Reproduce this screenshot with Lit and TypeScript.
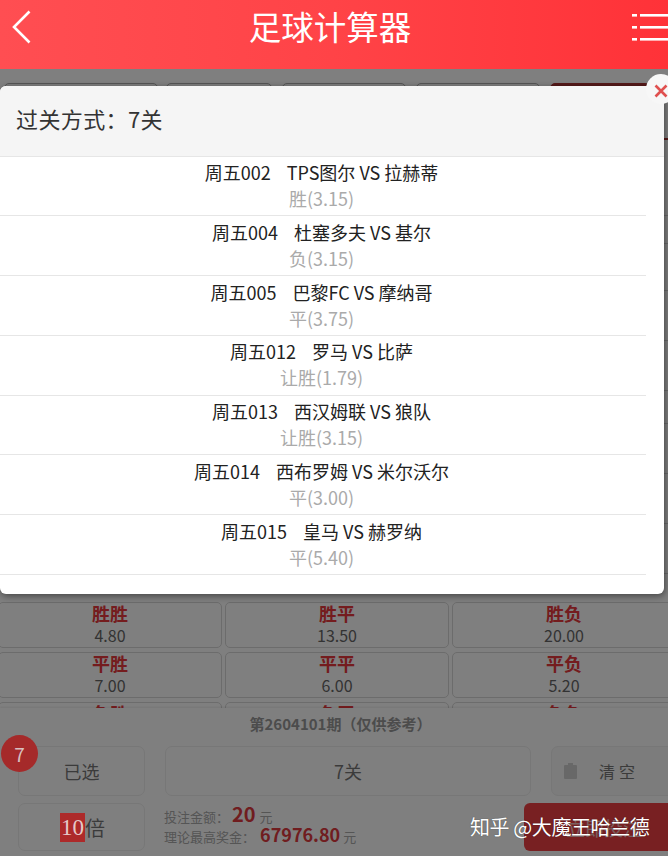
import { LitElement, html, css } from "lit";
import { customElement } from "lit/decorators.js";

const MATCHES = [
  { code: "周五002", teams: "TPS图尔 VS 拉赫蒂", pick: "胜(3.15)" },
  { code: "周五004", teams: "杜塞多夫 VS 基尔", pick: "负(3.15)" },
  { code: "周五005", teams: "巴黎FC VS 摩纳哥", pick: "平(3.75)" },
  { code: "周五012", teams: "罗马 VS 比萨", pick: "让胜(1.79)" },
  { code: "周五013", teams: "西汉姆联 VS 狼队", pick: "让胜(3.15)" },
  { code: "周五014", teams: "西布罗姆 VS 米尔沃尔", pick: "平(3.00)" },
  { code: "周五015", teams: "皇马 VS 赫罗纳", pick: "平(5.40)" },
];

const CELLS = [
  ["胜胜", "4.80"], ["胜平", "13.50"], ["胜负", "20.00"],
  ["平胜", "7.00"], ["平平", "6.00"], ["平负", "5.20"],
  ["负胜", "30.00"], ["负平", "13.50"], ["负负", "8.00"],
];

const TABS = [
  { w: 154, gap: 8 },
  { w: 106, gap: 10 },
  { w: 124, gap: 10 },
  { w: 124, gap: 10 },
  { w: 100, gap: 0 },
];
const BACK_ROWS = [41, 76, 28, 47, 50, 50, 33, 50, 50, 50];

@customElement("app-root")
export class AppRoot extends LitElement {
  static styles = css`
    :host {
      display: block;
      position: relative;
      width: 668px;
      height: 856px;
      overflow: hidden;
      background: #fff;
      font-family: "Noto Sans CJK SC", "Open Sans", sans-serif;
    }
    * { box-sizing: border-box; }

    header {
      position: relative;
      z-index: 3;
      height: 69px;
      display: flex;
      align-items: center;
      justify-content: space-between;
      background: linear-gradient(90deg, #ff4e52 0%, #ff4347 50%, #ff3238 100%);
      color: #fff;
    }
    .back { margin: 0 0 15px 11px; display: block; }
    .menu { display: block; margin-bottom: 13px; }
    h1 {
      position: absolute;
      left: 0;
      right: 8px;
      top: 3px;
      margin: 0;
      text-align: center;
      font-size: 32.5px;
      line-height: 46px;
      font-weight: 400;
    }

    .behind { height: 533px; padding-top: 14px; overflow: hidden; }
    .tabs { display: flex; padding-left: 4px; height: 16px; }
    .tab { border: 1px solid #aaa; border-radius: 5px 5px 0 0; }
    .tab.on { background: #a33; border-color: #a33; }
    .back-row { border-bottom: 1px solid #d4d4d4; }
    .back-row.first { border-bottom: 2px solid #b03030; }

    .grid {
      display: grid;
      grid-template-columns: repeat(3, 224px);
      grid-auto-rows: 46px;
      gap: 4px 3px;
      margin: 0 -8px 0 -2px;
      height: 106px;
      overflow: hidden;
    }
    .cell {
      border: 1px solid #d8d8d8;
      border-radius: 5px;
      text-align: center;
    }
    .cell b {
      display: block;
      color: #e8383d;
      font-size: 18px;
      line-height: 20px;
      margin-bottom: 1px;
    }
    .cell span {
      display: block;
      color: #666;
      font-size: 16px;
      line-height: 22px;
    }

    .panel {
      position: relative;
      background: #fff;
      height: 148px;
      box-shadow: 0 -1px 2px rgba(0, 0, 0, 0.08);
    }
    .period {
      margin: 0;
      padding: 6px 0 0 13px;
      text-align: center;
      color: #999;
      font-size: 15px;
      line-height: 20px;
      font-weight: 700;
      height: 27px;
    }
    .line1 {
      display: flex;
      gap: 20px;
      padding-left: 18px;
      margin-top: 11px;
      width: 690px;
    }
    .line2 {
      display: flex;
      gap: 19px;
      padding-left: 18px;
      margin-top: 7px;
      width: 690px;
    }
    .btn {
      height: 50px;
      width: 127px;
      flex: none;
      border: 1px solid #eee;
      border-radius: 7px;
      display: flex;
      align-items: center;
      justify-content: center;
      color: #777;
      font-size: 18px;
    }
    .btn.wide { width: 366px; }
    .btn.clear {
      width: 139px;
      background: #f8f8f8;
      justify-content: flex-start;
      padding-left: 12px;
      gap: 22px;
      font-size: 16px;
      letter-spacing: 4px;
    }
    .btn.times { height: 48px; font-size: 20px; padding-left: 2px; }
    .times i {
      position: relative;
      z-index: 3;
      font-style: normal;
      font-family: "Liberation Serif", serif;
      font-size: 23px;
      line-height: 29px;
      width: 25px;
      text-align: center;
      background: #ad2a2a;
      color: #e5c8c8;
    }
    .stats {
      width: 341px;
      flex: none;
      color: #aaa;
      font-size: 13px;
      line-height: 21px;
      padding-top: 1px;
    }
    .stats div + div { margin-top: -2px; }
    .stats b { color: #e03a3f; font-weight: 700; line-height: 1; }
    .stats .a { font-size: 20px; margin: 0 1px 0 3px; }
    .stats .b { font-size: 18px; margin-left: 5px; }
    .submit {
      width: 160px;
      height: 48px;
      flex: none;
      border-radius: 6px;
      background: #f04144;
      color: #f4c0c0;
      display: flex;
      align-items: center;
      justify-content: center;
      font-size: 19px;
    }

    .badge {
      position: absolute;
      z-index: 3;
      left: 1px;
      top: 735px;
      width: 37px;
      height: 37px;
      border-radius: 50%;
      background: #a52a2a;
      color: #d8c0c0;
      font-size: 19px;
      line-height: 37px;
      text-align: center;
    }

    .overlay {
      position: absolute;
      z-index: 1;
      inset: 0;
      background: rgba(0, 0, 0, 0.5);
    }

    .dialog {
      position: absolute;
      z-index: 2;
      left: 0;
      top: 86px;
      width: 664px;
      height: 508px;
      background: #fff;
      border-radius: 6px;
      box-shadow: 1px 2px 7px rgba(0, 0, 0, 0.45);
    }
    .dialog-head {
      height: 71px;
      background: #f5f5f5;
      border-bottom: 1px solid #e6e6e6;
      border-radius: 6px 6px 0 0;
      padding: 0 0 7px 16px;
      display: flex;
      align-items: center;
      color: #333;
      font-size: 22px;
      letter-spacing: 0.4px;
    }
    .matches { margin-top: -0.7px; }
    .match {
      width: 646px;
      height: 59.83px;
      border-bottom: 1px solid #e6e6e6;
      text-align: center;
      padding: 2.6px 3px 0 0;
    }
    .match p { margin: 0; }
    .match .teams { color: #222; font-size: 18px; line-height: 26px; }
    .match .code { margin-right: 16px; }
    .match .pick { color: #aaa; font-size: 18px; line-height: 27px; }
    .close {
      position: absolute;
      z-index: 3;
      left: 646px;
      top: 74px;
      width: 30px;
      height: 30px;
      border-radius: 50%;
      background: #f7f7f7;
      display: flex;
      align-items: center;
      padding-left: 8px;
    }
    .close svg { display: block; margin-top: 4px; }

    .mark {
      position: absolute;
      z-index: 4;
      left: 470px;
      top: 811px;
      color: #fff;
      font-size: 20px;
      line-height: 32px;
      letter-spacing: -0.4px;
      white-space: nowrap;
      text-shadow: 0 0 1px rgba(0, 0, 0, 0.5);
    }
  `;

  render() {
    return html`
      <header>
        <svg class="back" width="22" height="36" viewBox="0 0 22 36" fill="none">
          <path d="M18.5 2.5 3 18l15.5 15.5" stroke="#fff" stroke-width="2.6" />
        </svg>
        <h1>足球计算器</h1>
        <svg class="menu" width="36" height="30" viewBox="0 0 36 30" fill="#fff">
          <rect x="0" y="1" width="5" height="2.6" />
          <rect x="8" y="1" width="28" height="2.6" />
          <rect x="0" y="13" width="5" height="2.6" />
          <rect x="8" y="13" width="28" height="2.6" />
          <rect x="0" y="25" width="5" height="2.6" />
          <rect x="8" y="25" width="28" height="2.6" />
        </svg>
      </header>

      <div class="behind">
        <div class="tabs">
          ${TABS.map(
            (t, i) =>
              html`<div
                class="tab ${i === 4 ? "on" : ""}"
                style="width:${t.w}px;margin-right:${t.gap}px"
              ></div>`
          )}
        </div>
        <div>
          ${BACK_ROWS.map(
            (h, i) =>
              html`<div class="back-row ${i === 0 ? "first" : ""}" style="height:${h}px"></div>`
          )}
        </div>
      </div>

      <div class="grid">
        ${CELLS.map(
          ([k, v]) => html`<div class="cell"><b>${k}</b><span>${v}</span></div>`
        )}
      </div>

      <div class="panel">
        <p class="period">第2604101期（仅供参考）</p>
        <div class="line1">
          <div class="btn">已选</div>
          <div class="btn wide">7关</div>
          <div class="btn clear">
            <svg width="13" height="16" viewBox="0 0 13 16" fill="#d0d0d0">
              <rect x="4" y="0" width="5" height="2" />
              <rect x="0" y="2" width="13" height="14" rx="1" />
            </svg>
            <span>清空</span>
          </div>
        </div>
        <div class="line2">
          <div class="btn times"><i>10</i>倍</div>
          <div class="stats">
            <div>投注金额：<b class="a">20</b> 元</div>
            <div>理论最高奖金：<b class="b">67976.80</b> 元</div>
          </div>
          <div class="submit">立即投注</div>
        </div>
      </div>

      <div class="badge">7</div>
      <div class="overlay"></div>

      <section class="dialog">
        <div class="dialog-head">过关方式：7关</div>
        <div class="matches">
          ${MATCHES.map(
            (m) => html`
              <div class="match">
                <p class="teams"><span class="code">${m.code}</span>${m.teams}</p>
                <p class="pick">${m.pick}</p>
              </div>
            `
          )}
        </div>
      </section>
      <div class="close">
        <svg width="14" height="14" viewBox="0 0 14 14" fill="none">
          <path d="M1.5 1.5 12.5 12.5M12.5 1.5 1.5 12.5" stroke="#e0504f" stroke-width="2.6" />
        </svg>
      </div>

      <div class="mark">知乎 @大魔王哈兰德</div>
    `;
  }
}
